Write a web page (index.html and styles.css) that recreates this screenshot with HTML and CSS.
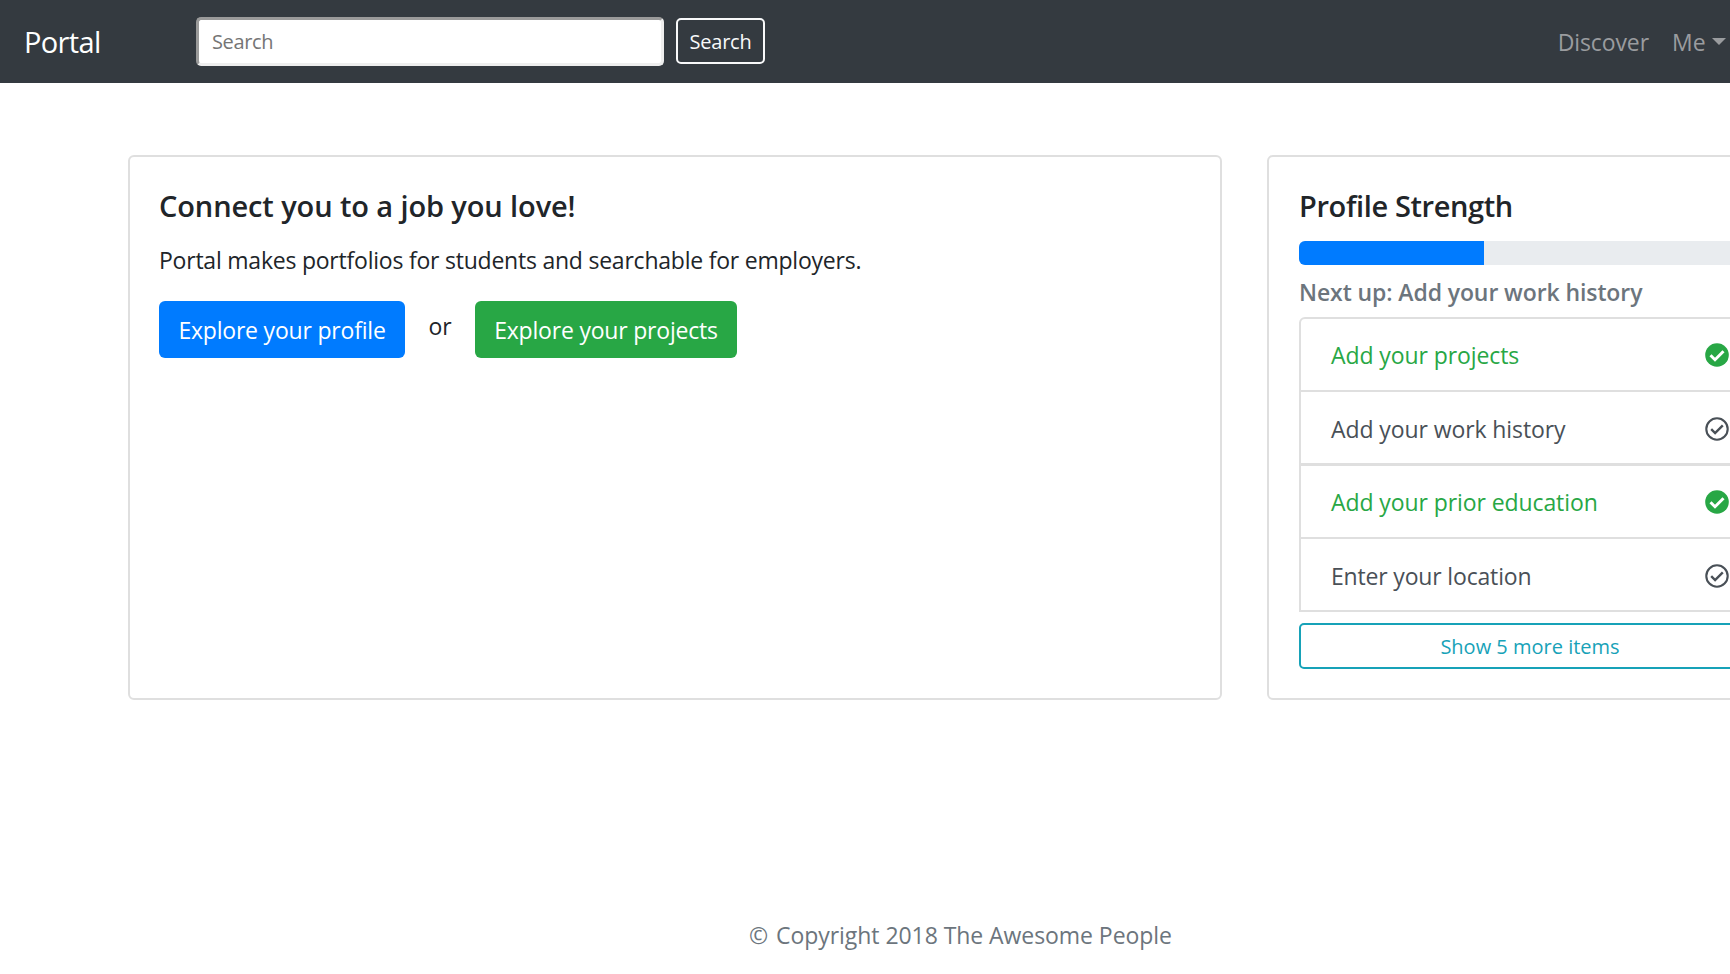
FILE: index.html
```html
<!DOCTYPE html>
<html lang="en">
<head>
<meta charset="utf-8">
<title>Portal</title>
<link rel="stylesheet" href="styles.css">
</head>
<body>
<nav class="navbar">
  <a class="brand">Portal</a>
  <form class="search">
    <div class="search-input">Search</div>
    <div class="search-btn">Search</div>
  </form>
  <div class="nav-links">
    <a class="nav-discover">Discover</a>
    <a class="nav-me"><span>Me</span><i class="caret"></i></a>
  </div>
</nav>
<main class="cards">
  <section class="card card-main">
    <h1 class="title title-main">Connect you to a job you love!</h1>
    <p class="lead">Portal makes portfolios for students and searchable for employers.</p>
    <div class="actions">
      <a class="btn btn-profile">Explore your profile</a>
      <span class="or">or</span>
      <a class="btn btn-projects">Explore your projects</a>
    </div>
  </section>
  <section class="card card-side">
    <h2 class="title title-side">Profile Strength</h2>
    <div class="progress"><div class="bar"></div></div>
    <p class="next">Next up: Add your work history</p>
    <ul class="list">
      <li class="item done"><span>Add your projects</span>
        <svg class="icon" viewBox="0 0 24 24"><circle cx="12" cy="12" r="11.8" fill="currentColor"/><path d="M5.5 12.2l4.5 4.5 8.5-8.5" fill="none" stroke="#fff" stroke-width="3"/></svg></li>
      <li class="item low"><span>Add your work history</span>
        <svg class="icon" viewBox="0 0 24 24"><circle cx="12" cy="12" r="10.7" fill="none" stroke="currentColor" stroke-width="2.1"/><path d="M6.2 12.2l3.9 3.9 7.7-7.7" fill="none" stroke="currentColor" stroke-width="2.4"/></svg></li>
      <li class="item done thick"><span>Add your prior education</span>
        <svg class="icon" viewBox="0 0 24 24"><circle cx="12" cy="12" r="11.8" fill="currentColor"/><path d="M5.5 12.2l4.5 4.5 8.5-8.5" fill="none" stroke="#fff" stroke-width="3"/></svg></li>
      <li class="item low"><span class="tight">Enter your location</span>
        <svg class="icon" viewBox="0 0 24 24"><circle cx="12" cy="12" r="10.7" fill="none" stroke="currentColor" stroke-width="2.1"/><path d="M6.2 12.2l3.9 3.9 7.7-7.7" fill="none" stroke="currentColor" stroke-width="2.4"/></svg></li>
    </ul>
    <a class="more">Show 5 more items</a>
  </section>
</main>
<footer class="footer"><span class="copy">©</span> Copyright 2018 The Awesome People</footer>
</body>
</html>
```
FILE: styles.css
```css
* { box-sizing: border-box; }
html, body { margin: 0; overflow: hidden; }
body {
  height: 974px;
  display: flex;
  flex-direction: column;
  background: #fff;
  color: #212529;
  font: 23px/36px "Open Sans", "Noto Sans", sans-serif;
  white-space: nowrap;
}
h1, h2, p, ul { margin: 0; padding: 0; }
.navbar {
  flex: none;
  height: 83px;
  display: flex;
  align-items: center;
  background: #343a40;
  padding: 0 4px 0 24px;
}
.brand { width: 172px; color: #fff; font-size: 29px; letter-spacing: -0.65px; }
.search { display: flex; align-items: center; gap: 12px; font-size: 20px; }
.search-input {
  width: 468px;
  height: 49px;
  padding: 0 12px 0 13px;
  line-height: 44px;
  letter-spacing: -0.35px;
  background: #fff;
  color: #757575;
  border: 3px solid;
  border-color: #9a9a9a #eee #eee #9a9a9a;
  border-radius: 5px;
}
.search-btn {
  width: 89px;
  height: 46px;
  margin-bottom: 1px;
  line-height: 44px;
  letter-spacing: -0.2px;
  text-align: center;
  color: #f8f9fa;
  border: 2px solid #f8f9fa;
  border-radius: 5px;
}
.nav-links { display: flex; gap: 23px; margin-left: auto; color: #9a9c9f; }
.nav-discover { letter-spacing: -0.1px; }
.nav-me { display: flex; align-items: center; gap: 6px; letter-spacing: 0.2px; }
.caret { border: 7.5px solid transparent; border-top-color: currentColor; border-bottom: 0; }
.cards {
  flex: none;
  width: 1665px;
  height: 545px;
  display: grid;
  grid-template-columns: 1094px 526px;
  gap: 45px;
  margin: 72px 0 0 128px;
}
.card { border: 2px solid #dfdfdf; border-radius: 6px; padding: 31px 30px 0 29px; }
.title { font-size: 29px; font-weight: 600; }
.title-main { letter-spacing: -0.11px; }
.title-side { letter-spacing: -0.38px; }
.lead { margin-top: 18px; letter-spacing: -0.225px; }
.actions { display: flex; align-items: center; margin-top: 23px; }
.btn { height: 57px; line-height: 58px; letter-spacing: -0.2px; border-radius: 6px; color: #fff; text-align: center; }
.btn-profile { width: 246px; background: #007bff; }
.btn-projects { width: 262px; background: #28a745; }
.or { width: 70px; padding-bottom: 7px; text-align: center; }
.card-side { padding-left: 30px; }
.progress { height: 24px; margin-top: 17px; background: #e9ecef; border-radius: 6px; overflow: hidden; }
.bar { width: 40%; height: 100%; background: #007bff; }
.next { margin-top: 9px; font-weight: 600; letter-spacing: -0.1px; color: #6c757d; }
.list { margin-top: 7px; list-style: none; border: 2px solid #dfdfdf; border-radius: 6px 6px 0 0; }
.item {
  height: 73px;
  display: flex;
  align-items: center;
  justify-content: space-between;
  padding: 1px 30px 0 30px;
  color: #495057;
  letter-spacing: -0.09px;
}
.item + .item { border-top: 2px solid #dfdfdf; }
.item:first-child { height: 71px; }
.item.thick { height: 74px; border-top-width: 3px; }
.item.low { padding-top: 3px; }
.item.done { color: #28a745; }
.tight { letter-spacing: -0.17px; }
.icon { width: 24px; height: 24px; }
.more {
  display: block;
  height: 46px;
  margin-top: 11px;
  border: 2px solid #17a2b8;
  border-radius: 5px;
  color: #17a2b8;
  font-size: 20px;
  line-height: 44px;
  text-align: center;
}
.footer { width: 1921px; margin-top: 217px; text-align: center; color: #6c757d; letter-spacing: -0.06px; }
.copy { margin-right: 2px; }
```
